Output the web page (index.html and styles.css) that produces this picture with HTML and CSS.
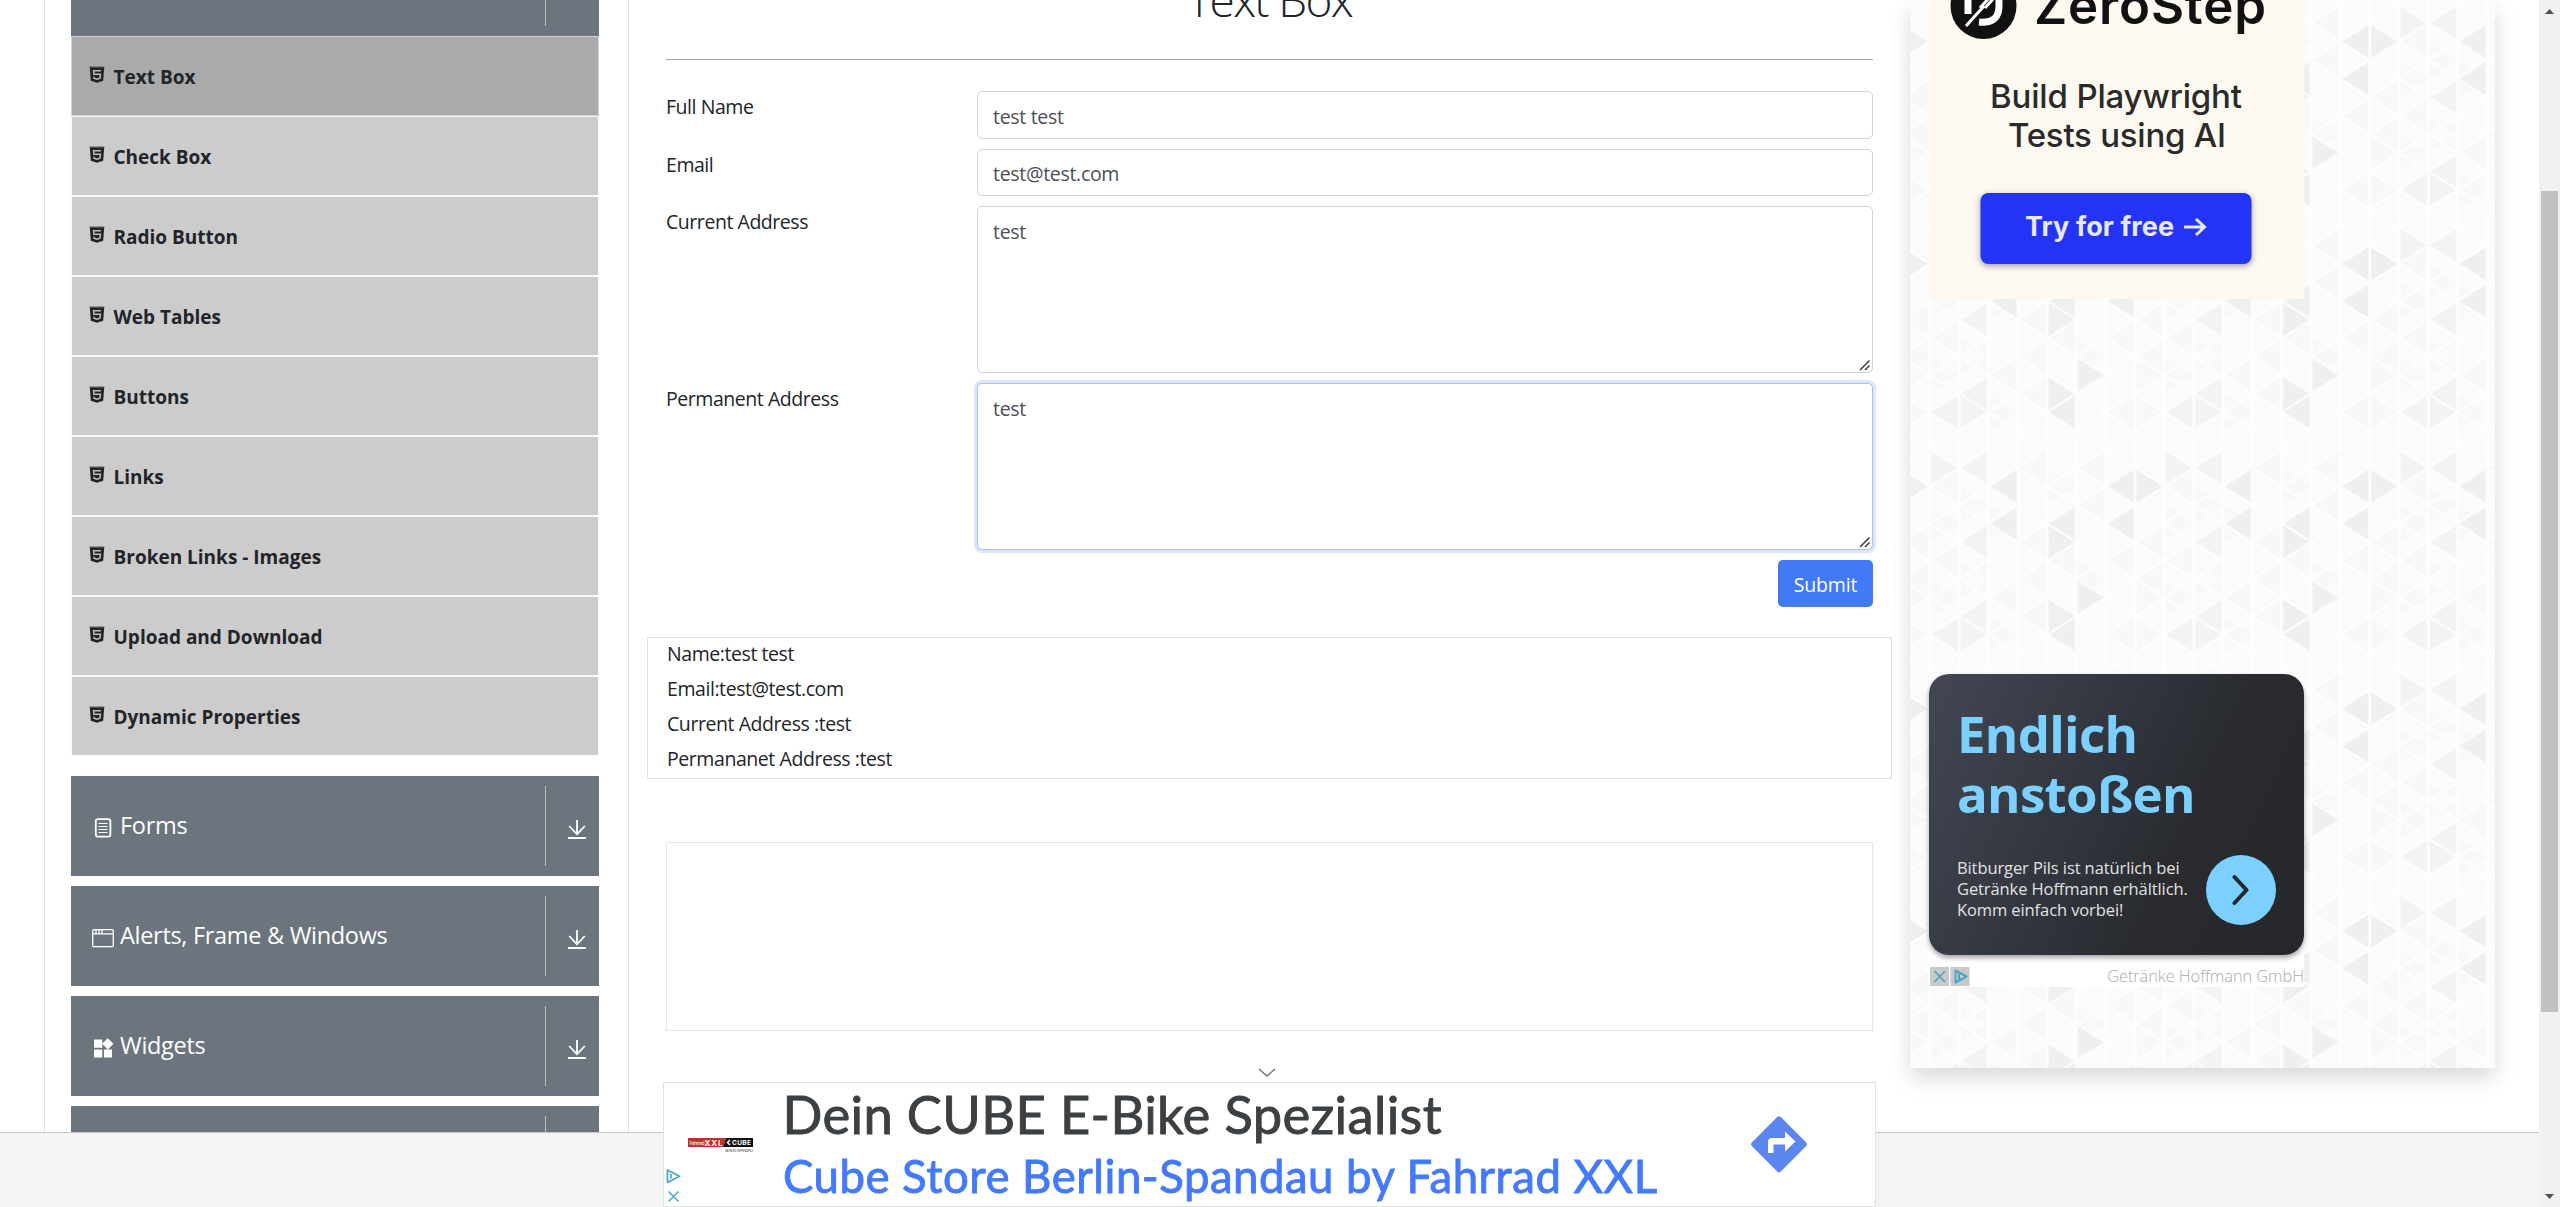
FILE: index.html
```html
<!DOCTYPE html>
<html lang="en">
<head>
<meta charset="utf-8">
<title>DEMOQA</title>
<link rel="stylesheet" href="styles.css">
</head>
<body>
<svg class="sprite" aria-hidden="true">
  <symbol id="html5" viewBox="0 0 16 17">
    <path fill="#212529" opacity=".3" d="M.3 0h15.4v1.6H.3z"/>
    <path fill="#212529" d="M.8 1.2h14.4l-1 13.6L8 16.8 1.8 14.8z"/>
    <path fill="none" stroke="currentColor" stroke-width="1.5" d="M12 4.7H4.6l.3 3.5h6.5l-.5 4L8 13.1l-2.9-.9-.1-1.6"/>
  </symbol>
  <symbol id="down" viewBox="0 0 18 20">
    <path fill="none" stroke="#fff" stroke-width="1.8" d="M9 0v14M1.2 6 9 14.3 16.8 6M0 18h18"/>
  </symbol>
</svg>

<div class="page">
  <nav class="sidebar">
    <div class="group group-first"><span class="group-name"></span><span class="group-toggle"></span></div>
    <ul class="menu">
      <li class="item active"><svg class="ic"><use href="#html5"/></svg>Text Box</li>
      <li class="item"><svg class="ic"><use href="#html5"/></svg>Check Box</li>
      <li class="item"><svg class="ic"><use href="#html5"/></svg>Radio Button</li>
      <li class="item"><svg class="ic"><use href="#html5"/></svg>Web Tables</li>
      <li class="item"><svg class="ic"><use href="#html5"/></svg>Buttons</li>
      <li class="item"><svg class="ic"><use href="#html5"/></svg>Links</li>
      <li class="item"><svg class="ic"><use href="#html5"/></svg>Broken Links - Images</li>
      <li class="item"><svg class="ic"><use href="#html5"/></svg>Upload and Download</li>
      <li class="item"><svg class="ic"><use href="#html5"/></svg>Dynamic Properties</li>
    </ul>
    <div class="group">
      <span class="group-name"><svg class="gic" viewBox="0 0 22 22" fill="none" stroke="#fff"><rect x="3.8" y="2.2" width="14.6" height="17.4" rx="2.2" stroke-width="1.8"/><path stroke-width="1.2" d="M6.5 6.5h9M6.5 9.5h9M6.5 12.5h9M6.5 15.5h9"/></svg>Forms</span>
      <span class="group-toggle"><svg class="dn"><use href="#down"/></svg></span>
    </div>
    <div class="group">
      <span class="group-name"><svg class="gic" viewBox="0 0 22 22" fill="none" stroke="#fff"><rect x=".7" y="2.7" width="20.6" height="17" rx="1.2" stroke-width="1.3"/><path stroke-width="1.3" d="M1 6.8h20M4 3v3.5M7 3v3.5M10 3v3.5"/></svg>Alerts, Frame &amp; Windows</span>
      <span class="group-toggle"><svg class="dn"><use href="#down"/></svg></span>
    </div>
    <div class="group">
      <span class="group-name"><svg class="gic" viewBox="0 0 22 22" fill="#fff"><path d="M2 2.5h8.3v8.3H2zM2 12.6h8.3v8H2zM12 12.6h8v8h-8zM15.8 1.2 21.4 6.8 15.8 12.4 10.2 6.8z"/></svg>Widgets</span>
      <span class="group-toggle"><svg class="dn"><use href="#down"/></svg></span>
    </div>
    <div class="group"><span class="group-name"></span><span class="group-toggle"></span></div>
  </nav>

  <main class="content">
    <h1 class="title">Text Box</h1>
    <form class="form">
      <label class="label">Full Name</label><input class="field" value="test test">
      <label class="label">Email</label><input class="field field-email" value="test@test.com">
      <label class="label">Current Address</label><textarea class="field area">test</textarea>
      <label class="label">Permanent Address</label><textarea class="field area focused">test</textarea>
      <button class="submit" type="button">Submit</button>
    </form>
    <div class="output">
      <p>Name:test test</p>
      <p>Email:test@test.com</p>
      <p>Current Address :test</p>
      <p>Permananet Address :test</p>
    </div>
    <div class="placeholder"></div>
  </main>

  <aside class="ads">
    <svg class="texture" width="585" height="1068" aria-hidden="true">
      <defs>
        <pattern id="tri" width="234.6" height="222.4" x="19.8" y="4.5" patternUnits="userSpaceOnUse">
          <rect width="235" height="223" fill="#fbfbfb"/>
          <g transform="scale(29.325 18.533)">
            <path fill="#f8f8f8" d="M0 2l1-1v2zM2 3l-1-1v2zM3 1l1-1v2zM5 2l-1-1v2zM0 6l1-1v2zM4 6l1-1v2zM3 4l-1-1v2zM6 7l-1-1v2zM7 7l1-1v2zM8 8l-1-1v2zM3 9l1-1v2zM1 8l-1-1v2zM6 10l1-1v2zM5 1l1-1v2zM8 10l-1-1v2zM2 7l-1-1v2zM7 5l1-1v2zM1 4l-1-1v2zM2 8l1-1v2zM3 10l-1-1v2zM3 5l1-1v2zM1 7l1-1v2zM3 7l1-1v2zM6 6l1-1v2zM5 3l1-1v2z"/>
            <path fill="#f3f3f3" d="M1 5l1-1v2zM1 9l1-1v2zM0 10l1-1v2zM2 10l-1-1v2zM1 1l-1-1v2zM1 1l1-1v2z"/>
            <path fill="#efefef" d="M6 2l1-1v2zM8 2l-1-1v2zM6 4l1-1v2zM2 2l1-1v2zM2 4l1-1v2zM4 4l1-1v2zM5 5l-1-1v2zM6 8l-1-1v2zM5 9l-1-1v2zM4 10l1-1v2z"/>
            <path fill="none" stroke="#fff" stroke-opacity=".8" stroke-width=".1" d="M0 0v12M1 0v12M2 0v12M3 0v12M4 0v12M5 0v12M6 0v12M7 0v12M8 0v12M0-8l8 8M0-6l8 8M0-4l8 8M0-2l8 8M0 0l8 8M0 2l8 8M0 4l8 8M0 6l8 8M0 8l8 8M0 10l8 8M0 12l8 8M0 0l8-8M0 2l8-8M0 4l8-8M0 6l8-8M0 8l8-8M0 10l8-8M0 12l8-8M0 14l8-8M0 16l8-8M0 18l8-8M0 20l8-8"/>
          </g>
        </pattern>
      </defs>
      <rect width="585" height="1068" fill="url(#tri)"/>
    </svg>
    <svg class="zerostep" width="375" height="299" viewBox="1929 0 375 299">
      <rect x="1929" width="375" height="299" fill="#fdf9f1"/>
      <circle cx="1983.500" cy="6" r="33" fill="#111"/>
      <path fill="none" stroke="#fff" stroke-width="7" d="M1968 14V-4q0-12 15-12M1979 22q20 2 20-16V-8"/>
      <path fill="none" stroke="#fff" stroke-width="3" d="M1966 26l18-20M1980 8l8-9M1985 8l8-9"/>
      <g font-family="Inter, sans-serif">
        <text x="2034" y="24" font-size="51" font-weight="600" fill="#111" textLength="232">ZeroStep</text>
        <g font-size="33" font-weight="500" fill="#2a2a2a">
          <text x="1990" y="108" textLength="252">Build Playwright</text>
          <text x="2008" y="147" textLength="218">Tests using AI</text>
        </g>
        <rect class="cta" x="1980.500" y="193" width="271" height="71" rx="8" fill="#2434f7"/>
        <text x="2025" y="236" font-size="27" font-weight="700" fill="#e8e8ff" textLength="149">Try for free</text>
      </g>
      <path fill="none" stroke="#e8e8ff" stroke-width="3" d="M2184 227h20M2196 219l8.500 8-8.500 8"/>
    </svg>
    <section class="beer">
      <div class="beer-card">
        <h2 class="beer-title">Endlich<br>anstoßen</h2>
        <div class="beer-row">
          <p class="beer-text">Bitburger Pils ist natürlich bei<br>Getränke Hoffmann erhältlich.<br>Komm einfach vorbei!</p>
          <span class="beer-go"><svg width="18" height="32" viewBox="0 0 18 32"><path fill="none" stroke="#24272c" stroke-width="4" stroke-linecap="round" stroke-linejoin="round" d="M2.500 3l12 13-12 13"/></svg></span>
        </div>
      </div>
      <div class="beer-foot">
        <svg width="40" height="19" viewBox="0 0 40 19"><path fill="#c9c9c9" d="M0 0h19v19H0zM20.500 0h19v19h-19z"/><path fill="none" stroke="#48a5c4" stroke-width="1.600" d="M4.500 4l10.500 11M15 4 4.500 15"/><path fill="none" stroke="#48a5c4" stroke-width="2" stroke-linejoin="round" d="M25.500 3.500v12l11-6zM29 7v5"/></svg>
        <span class="beer-brand">Getränke Hoffmann GmbH</span>
      </div>
    </section>
  </aside>
</div>

<footer class="footer"></footer>

<svg class="collapse" width="18" height="9" viewBox="0 0 18 9"><path fill="none" stroke="#777" stroke-width="1.500" d="M1 1l8 7 8-7"/></svg>
<div class="banner">
  <svg width="1211" height="123" viewBox="664 1083 1211 123">
    <g transform="translate(688 1138)">
      <path fill="#c22f2c" d="M0 0h38l-3 9H0z"/><path fill="#111" d="M38 0h27v9H35z"/>
      <g font-family="Inter, sans-serif" font-weight="700" fill="#fff">
        <text x="1.500" y="7" font-size="5" font-weight="400" textLength="15">Fahrrad</text>
        <text x="16.500" y="7.500" font-size="8" textLength="18">XXL</text>
        <text x="44" y="7" font-size="6.500" textLength="19">CUBE</text>
        <text x="37" y="14" font-size="4" font-weight="400" fill="#555" textLength="28">BERLIN-SPANDAU</text>
      </g>
      <path fill="none" stroke="#fff" stroke-width="1.500" d="M42 2l-2.500 2.500L42 7"/>
    </g>
    <g font-family="Lato, sans-serif">
      <text x="782.500" y="1134" font-size="52.500" fill="#3c4043" stroke="#3c4043" stroke-width=".9" textLength="659">Dein CUBE E-Bike Spezialist</text>
      <text x="783" y="1192.500" font-size="45.500" fill="#4279ff" stroke="#4279ff" stroke-width=".9" textLength="874">Cube Store Berlin-Spandau by Fahrrad XXL</text>
    </g>
    <path fill="none" stroke="#4ba9d0" stroke-width="1.800" stroke-linejoin="round" d="M667.500 1170v12.500l12-6.200zM671 1174v4.500"/>
    <path fill="none" stroke="#4ba9d0" stroke-width="1.500" d="M668.500 1191.500l10 10M678.500 1191.500l-10 10"/>
    <rect x="1758.500" y="1123.800" width="41" height="41" rx="2.500" fill="#5b85ef" transform="rotate(45 1779 1144.300)"/>
    <path fill="#fff" d="M1768 1153v-11q0-4 4-4h13v-6.500l10.500 10-10.500 10v-7h-11.500v8.500z"/>
  </svg>
</div>

<div class="scrollbar">
  <svg width="9" height="5"><path fill="#505050" d="M0 5 4.500 0 9 5z"/></svg>
  <div class="thumb"></div>
  <svg width="9" height="5"><path fill="#505050" d="M0 0h9L4.500 5z"/></svg>
</div>
</body>
</html>
```
FILE: styles.css
```css
* { box-sizing: border-box; }

body {
  margin: 0;
  height: 1207px;
  overflow: hidden;
  background: #fff;
  color: #212529;
  font: 19.5px/30px "Open Sans", "Noto Sans", sans-serif;
}

.sprite { position: absolute; width: 0; height: 0; }

.page {
  display: flex;
  align-items: flex-start;
  height: 1207px;
  padding-left: 44px;
  overflow: hidden;
}

/* left navigation */
.sidebar {
  width: 585px;
  height: 1207px;
  padding: 0 29px 0 26px;
  border: solid #dee2e6;
  border-width: 0 1px;
}

.group {
  display: flex;
  height: 100px;
  margin-bottom: 10px;
  padding: 10px 0;
  background: #6c757d;
  color: #fff;
  font-size: 23.5px;
  letter-spacing: -0.3px;
}

.group-first { height: 36px; margin: 0; padding-top: 0; }

.group-name {
  display: flex;
  flex: 1;
  align-items: center;
  gap: 6px;
  padding: 0 0 2px 21px;
  border-right: 1px solid #b9bdc1;
}

.gic { width: 22px; height: 22px; margin-top: 5px; }

.group-toggle {
  display: flex;
  align-items: center;
  width: 53px;
  padding: 7px 0 0 22px;
}

.dn { width: 18px; height: 20px; }

.menu { margin: 0 0 20px; padding: 0; list-style: none; }

.item {
  display: flex;
  align-items: center;
  gap: 8.5px;
  height: 80px;
  padding: 1px 17px 0;
  border: 1px solid #f8f9fa;
  background: #ccc;
  color: #212529;
  font-size: 19px;
  font-weight: 700;
  letter-spacing: 0;
}

.item.active { background: #aaa; border-color: #cfd3d7; }

.ic { width: 16px; height: 17px; margin-top: -5px; color: #bbb; }

/* form */
.content { width: 1281px; padding: 0 18px; }

.title {
  height: 60px;
  margin: -31px 19px 30px;
  font-size: 46px;
  font-weight: 300;
  line-height: 60px;
  letter-spacing: -1.7px;
  text-align: center;
}

.form {
  display: grid;
  grid-template-columns: 311px 896px;
  row-gap: 10px;
  margin: 0 19px;
  padding-top: 31px;
  border-top: 1px solid #a3a5a7;
}

.label { padding-top: 1px; letter-spacing: -0.45px; }

.field {
  width: 100%;
  height: 48px;
  margin: 0;
  padding: 10px 15px 8px;
  border: 1px solid #ced4da;
  border-radius: 5px;
  outline: none;
  background: #fff;
  color: #495057;
  font: inherit;
  letter-spacing: -0.3px;
}

.field-email { height: 47px; }

.area {
  display: block;
  height: 167px;
  overflow: auto;
  resize: vertical;
}

.area::-webkit-resizer {
  background: url('data:image/svg+xml,<svg xmlns="http://www.w3.org/2000/svg" width="15" height="15"><path fill="none" stroke="%23444" stroke-width="1.6" d="M3 13 12.500 3.500M8 13l4.500-4.500"/></svg>') no-repeat right bottom;
}

.focused { border-color: #a3c1f3; box-shadow: 0 0 0 3px #dbe6fc; }

.submit {
  grid-column: 2;
  justify-self: end;
  width: 95px;
  height: 47px;
  padding: 2px 0 0;
  border: 0;
  border-radius: 5px;
  background: #4279f7;
  color: #fff;
  font: inherit;
  letter-spacing: -0.2px;
}

.output {
  height: 142px;
  margin-top: 30px;
  padding: 1px 19px;
  border: 1px solid #dee2e6;
  letter-spacing: -0.43px;
}

.output p { margin: 0 0 5px; }

.placeholder {
  height: 189px;
  margin: 63px 19px 0;
  border: 1px solid #e3e5e8;
}

/* right column */
.ads {
  position: relative;
  display: flex;
  flex-direction: column;
  gap: 375px;
  width: 585px;
  height: 1068px;
  padding-left: 19px;
  box-shadow: 0 10px 20px rgba(0, 0, 0, .15);
}

.texture { position: absolute; top: 0; left: 0; }

.zerostep { position: relative; display: block; }

.cta { filter: drop-shadow(0 2px 3px rgba(60, 60, 120, .5)); }

.beer {
  position: relative;
  width: 375px;
  height: 313px;
  background: #fff;
}

.beer-card {
  height: 281px;
  padding: 29px 28px 0;
  border-radius: 20px;
  background: linear-gradient(115deg, #424753 0%, #30343c 45%, #292b2f 65%, #26272b 100%);
  box-shadow: 0 3px 5px rgba(0, 0, 0, .35);
}

.beer-title {
  margin: 0;
  color: #7cd0ff;
  font: 700 51px/60px "Open Sans", sans-serif;
  letter-spacing: -0.7px;
}

.beer-row {
  display: flex;
  align-items: center;
  justify-content: space-between;
  margin-top: 32px;
}

.beer-text {
  margin: -3px 0 0;
  color: #e2e2e2;
  font: 16.5px/21px "Open Sans", sans-serif;
  letter-spacing: -0.1px;
  white-space: nowrap;
}

.beer-go {
  display: flex;
  align-items: center;
  justify-content: center;
  width: 70px;
  height: 70px;
  border-radius: 50%;
  background: #7cd0ff;
}

.beer-foot {
  display: flex;
  align-items: center;
  justify-content: space-between;
  height: 32px;
  padding: 10px 0 0 1px;
}

.beer-brand {
  color: #aaa;
  font: 300 16.5px/20px "Open Sans", sans-serif;
  letter-spacing: -0.12px;
}

/* overlays fixed to the window */
.footer {
  position: fixed;
  inset: 1132px 21px 0 0;
  border-top: 1px solid #c8c8c8;
  background: #f4f4f4;
}

.collapse { position: fixed; top: 1068px; left: 1258px; }

.banner {
  position: fixed;
  top: 1082px;
  left: 663px;
  width: 1213px;
  height: 125px;
  border: 1px solid #e2e2e2;
  background: #fff;
}

.banner svg { display: block; }

.scrollbar {
  position: fixed;
  inset: 0 0 0 auto;
  display: flex;
  flex-direction: column;
  align-items: center;
  width: 21px;
  padding: 9px 0 8px;
  background: #f1f1f1;
}

.thumb {
  width: 17px;
  height: 821px;
  margin: 177px 0 auto;
  background: #c1c1c1;
}
```
